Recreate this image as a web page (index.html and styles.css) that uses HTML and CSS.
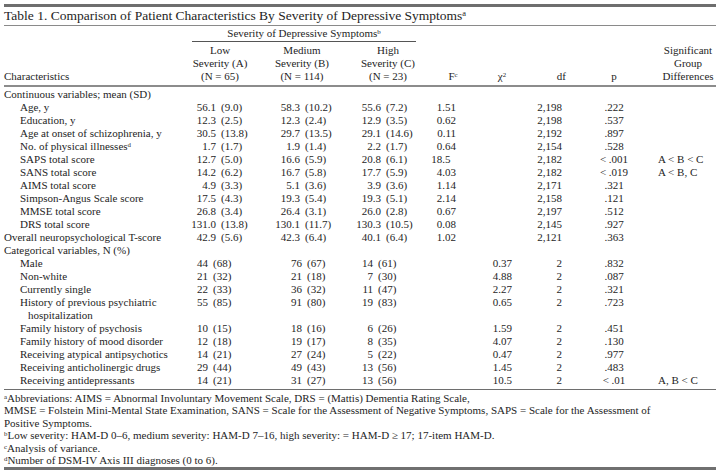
FILE: index.html
```html
<!DOCTYPE html>
<html>
<head>
<meta charset="utf-8">
<title>Table 1</title>
<link rel="stylesheet" href="styles.css">
</head>
<body>
<div class="page">
  <div class="title">Table 1. Comparison of Patient Characteristics By Severity of Depressive Symptoms<sup>a</sup></div>
  <table class="tbl">
    <colgroup>
      <col class="w1"><col class="wa"><col class="wb"><col class="wc"><col class="wf"><col class="wx"><col class="wd"><col class="wp"><col class="ws">
    </colgroup>
    <thead>
      <tr class="hrow1">
        <th></th>
        <th colspan="3"><div class="group-head">Severity of Depressive Symptoms<sup>b</sup></div></th>
        <th></th><th></th><th></th><th></th><th></th>
      </tr>
      <tr class="hrow2">
        <th class="lab">Characteristics</th>
        <th class="ha">Low<br>Severity (A)<br>(N = 65)</th>
        <th class="hb">Medium<br>Severity (B)<br>(N = 114)</th>
        <th class="hc">High<br>Severity (C)<br>(N = 23)</th>
        <th class="hf">F<sup>c</sup></th>
        <th class="hx">χ<sup>2</sup></th>
        <th class="hd">df</th>
        <th class="hp">p</th>
        <th class="hs">Significant<br>Group<br>Differences</th>
      </tr>
    </thead>
    <tbody>
      <tr><td class="sec">Continuous variables; mean (SD)</td><td></td><td></td><td></td><td></td><td></td><td></td><td></td><td></td></tr>
      <tr><td class="it">Age, y</td><td class="a"><span class="m">56.1</span>(9.0)</td><td class="b"><span class="m">58.3</span>(10.2)</td><td class="c"><span class="m">55.6</span>(7.2)</td><td class="f">1.51</td><td class="x"></td><td class="d">2,198</td><td class="p">.222</td><td class="s"></td></tr>
      <tr><td class="it">Education, y</td><td class="a"><span class="m">12.3</span>(2.5)</td><td class="b"><span class="m">12.3</span>(2.4)</td><td class="c"><span class="m">12.9</span>(3.5)</td><td class="f">0.62</td><td class="x"></td><td class="d">2,198</td><td class="p">.537</td><td class="s"></td></tr>
      <tr><td class="it">Age at onset of schizophrenia, y</td><td class="a"><span class="m">30.5</span>(13.8)</td><td class="b"><span class="m">29.7</span>(13.5)</td><td class="c"><span class="m">29.1</span>(14.6)</td><td class="f">0.11</td><td class="x"></td><td class="d">2,192</td><td class="p">.897</td><td class="s"></td></tr>
      <tr><td class="it">No. of physical illnesses<sup>d</sup></td><td class="a"><span class="m">1.7</span>(1.7)</td><td class="b"><span class="m">1.9</span>(1.4)</td><td class="c"><span class="m">2.2</span>(1.7)</td><td class="f">0.64</td><td class="x"></td><td class="d">2,154</td><td class="p">.528</td><td class="s"></td></tr>
      <tr><td class="it">SAPS total score</td><td class="a"><span class="m">12.7</span>(5.0)</td><td class="b"><span class="m">16.6</span>(5.9)</td><td class="c"><span class="m">20.8</span>(6.1)</td><td class="f">18.5<span class="fs"></span></td><td class="x"></td><td class="d">2,182</td><td class="p">&lt; .001</td><td class="s">A &lt; B &lt; C</td></tr>
      <tr><td class="it">SANS total score</td><td class="a"><span class="m">14.2</span>(6.2)</td><td class="b"><span class="m">16.7</span>(5.8)</td><td class="c"><span class="m">17.7</span>(5.9)</td><td class="f">4.03</td><td class="x"></td><td class="d">2,182</td><td class="p">&lt; .019</td><td class="s">A &lt; B, C</td></tr>
      <tr><td class="it">AIMS total score</td><td class="a"><span class="m">4.9</span>(3.3)</td><td class="b"><span class="m">5.1</span>(3.6)</td><td class="c"><span class="m">3.9</span>(3.6)</td><td class="f">1.14</td><td class="x"></td><td class="d">2,171</td><td class="p">.321</td><td class="s"></td></tr>
      <tr><td class="it">Simpson-Angus Scale score</td><td class="a"><span class="m">17.5</span>(4.3)</td><td class="b"><span class="m">19.3</span>(5.4)</td><td class="c"><span class="m">19.3</span>(5.1)</td><td class="f">2.14</td><td class="x"></td><td class="d">2,158</td><td class="p">.121</td><td class="s"></td></tr>
      <tr><td class="it">MMSE total score</td><td class="a"><span class="m">26.8</span>(3.4)</td><td class="b"><span class="m">26.4</span>(3.1)</td><td class="c"><span class="m">26.0</span>(2.8)</td><td class="f">0.67</td><td class="x"></td><td class="d">2,197</td><td class="p">.512</td><td class="s"></td></tr>
      <tr><td class="it">DRS total score</td><td class="a"><span class="m">131.0</span>(13.8)</td><td class="b"><span class="m">130.1</span>(11.7)</td><td class="c"><span class="m">130.3</span>(10.5)</td><td class="f">0.08</td><td class="x"></td><td class="d">2,145</td><td class="p">.927</td><td class="s"></td></tr>
      <tr><td class="sec">Overall neuropsychological T-score</td><td class="a"><span class="m">42.9</span>(5.6)</td><td class="b"><span class="m">42.3</span>(6.4)</td><td class="c"><span class="m">40.1</span>(6.4)</td><td class="f">1.02</td><td class="x"></td><td class="d">2,121</td><td class="p">.363</td><td class="s"></td></tr>
      <tr><td class="sec">Categorical variables, N (%)</td><td></td><td></td><td></td><td></td><td></td><td></td><td></td><td></td></tr>
      <tr><td class="it">Male</td><td class="a"><span class="n">44</span>(68)</td><td class="b"><span class="n">76</span>(67)</td><td class="c"><span class="n">14</span>(61)</td><td class="f"></td><td class="x">0.37</td><td class="d">2</td><td class="p">.832</td><td class="s"></td></tr>
      <tr><td class="it">Non-white</td><td class="a"><span class="n">21</span>(32)</td><td class="b"><span class="n">21</span>(18)</td><td class="c"><span class="n">7</span>(30)</td><td class="f"></td><td class="x">4.88</td><td class="d">2</td><td class="p">.087</td><td class="s"></td></tr>
      <tr><td class="it">Currently single</td><td class="a"><span class="n">22</span>(33)</td><td class="b"><span class="n">36</span>(32)</td><td class="c"><span class="n">11</span>(47)</td><td class="f"></td><td class="x">2.27</td><td class="d">2</td><td class="p">.321</td><td class="s"></td></tr>
      <tr class="top"><td class="it">History of previous psychiatric<br><span class="cont">hospitalization</span></td><td class="a"><span class="n">55</span>(85)</td><td class="b"><span class="n">91</span>(80)</td><td class="c"><span class="n">19</span>(83)</td><td class="f"></td><td class="x">0.65</td><td class="d">2</td><td class="p">.723</td><td class="s"></td></tr>
      <tr><td class="it">Family history of psychosis</td><td class="a"><span class="n">10</span>(15)</td><td class="b"><span class="n">18</span>(16)</td><td class="c"><span class="n">6</span>(26)</td><td class="f"></td><td class="x">1.59</td><td class="d">2</td><td class="p">.451</td><td class="s"></td></tr>
      <tr><td class="it">Family history of mood disorder</td><td class="a"><span class="n">12</span>(18)</td><td class="b"><span class="n">19</span>(17)</td><td class="c"><span class="n">8</span>(35)</td><td class="f"></td><td class="x">4.07</td><td class="d">2</td><td class="p">.130</td><td class="s"></td></tr>
      <tr><td class="it">Receiving atypical antipsychotics</td><td class="a"><span class="n">14</span>(21)</td><td class="b"><span class="n">27</span>(24)</td><td class="c"><span class="n">5</span>(22)</td><td class="f"></td><td class="x">0.47</td><td class="d">2</td><td class="p">.977</td><td class="s"></td></tr>
      <tr><td class="it">Receiving anticholinergic drugs</td><td class="a"><span class="n">29</span>(44)</td><td class="b"><span class="n">49</span>(43)</td><td class="c"><span class="n">13</span>(56)</td><td class="f"></td><td class="x">1.45</td><td class="d">2</td><td class="p">.483</td><td class="s"></td></tr>
      <tr class="last"><td class="it">Receiving antidepressants</td><td class="a"><span class="n">14</span>(21)</td><td class="b"><span class="n">31</span>(27)</td><td class="c"><span class="n">13</span>(56)</td><td class="f"></td><td class="x">10.5</td><td class="d">2</td><td class="p">&lt; .01</td><td class="s">A, B &lt; C</td></tr>
    </tbody>
  </table>
  <div class="notes">
    <div><sup>a</sup>Abbreviations: AIMS = Abnormal Involuntary Movement Scale, DRS = (Mattis) Dementia Rating Scale,</div>
    <div>MMSE = Folstein Mini-Mental State Examination, SANS = Scale for the Assessment of Negative Symptoms, SAPS = Scale for the Assessment of</div>
    <div>Positive Symptoms.</div>
    <div><sup>b</sup>Low severity: HAM-D 0–6, medium severity: HAM-D 7–16, high severity: = HAM-D ≥ 17; 17-item HAM-D.</div>
    <div><sup>c</sup>Analysis of variance.</div>
    <div><sup>d</sup>Number of DSM-IV Axis III diagnoses (0 to 6).</div>
  </div>
</div>
</body>
</html>
```

FILE: styles.css
```css
html, body {
  margin: 0;
  background: #ffffff;
}
body {
  font-family: "Liberation Serif", "Times New Roman", serif;
  font-size: 11px;
  color: #1e1e1e;
}
.page {
  width: 712px;
  padding: 4px 4px 0 4px;
}
sup {
  font-size: 62%;
  line-height: 0;
  vertical-align: 0.5em;
}
.title {
  border-top: 3px solid #6e6e6e;
  border-bottom: 1px solid #8a8a8a;
  font-size: 13.5px;
  line-height: 16px;
  padding: 1px 0 1px 0;
  white-space: nowrap;
}
.tbl {
  width: 712px;
  border-collapse: collapse;
  table-layout: fixed;
}
.w1 { width: 184px; }
.wa { width: 80px; }
.wb { width: 82px; }
.wc { width: 80px; }
.wf { width: 46px; }
.wx { width: 52px; }
.wd { width: 48px; }
.wp { width: 76px; }
.ws { width: 64px; }
.tbl th, .tbl td {
  padding: 0;
  font-weight: normal;
  line-height: 13px;
  white-space: nowrap;
  text-align: left;
  vertical-align: bottom;
}
.hrow1 th {
  padding-top: 1px;
}
.group-head {
  text-align: center;
  margin: 0 14px 0 4px;
  border-bottom: 1px solid #555;
  padding-bottom: 1px;
}
.hrow2 th {
  text-align: center;
  padding-top: 2px;
  padding-bottom: 2px;
  border-bottom: 2px solid #8c8c8c;
}
.hrow2 th.lab { text-align: left; }
.hrow2 th.ha { padding-right: 16px; }
.hrow2 th.hb { padding-right: 14px; }
.hrow2 th.hc { padding-right: 4px; }
.hrow2 th.hd { text-align: right; padding-right: 10px; }
.hrow2 th.hs { padding-left: 8px; }
tbody tr:first-child td { padding-top: 1px; }
tbody tr.last td { padding-bottom: 2px; border-bottom: 1px solid #6e6e6e; }
tbody tr.top td { vertical-align: top; }
.sec { padding-left: 0; }
.it { padding-left: 16px !important; }
.cont { padding-left: 8px; }
.m, .n {
  display: inline-block;
  text-align: right;
  margin-right: 5px;
}
.a .m { width: 28px; }
.a .n { width: 20px; }
.b .m { width: 32px; }
.b .n { width: 34px; }
.c .m { width: 31px; }
.c .n { width: 23px; }
.f { text-align: right !important; padding-right: 20px !important; }
.fs { display: inline-block; width: 0.5em; }
.x { text-align: right !important; padding-right: 16px !important; }
.d { text-align: right !important; padding-right: 14px !important; }
.p { text-align: center !important; }
.s { padding-left: 6px !important; }
.notes {
  padding: 2px 0 1px 0;
  border-bottom: 3px solid #707070;
  line-height: 12.4px;
  white-space: nowrap;
}
```
